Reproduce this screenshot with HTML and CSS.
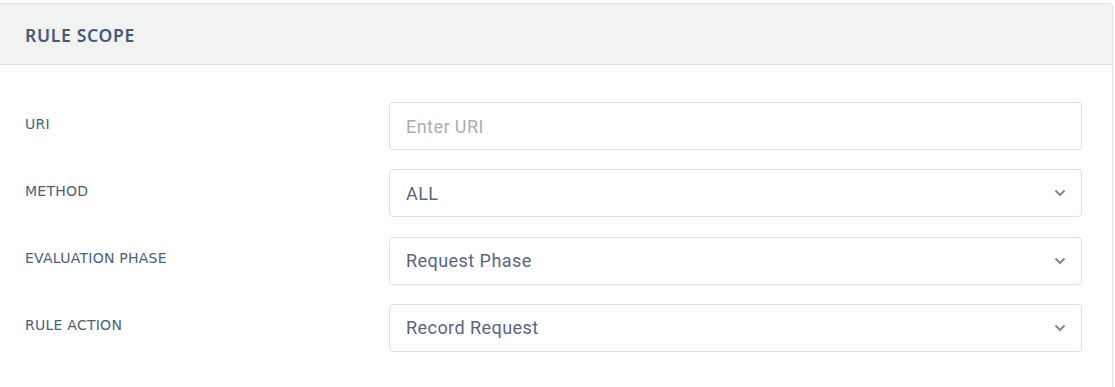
FILE: index.html
```html
<!DOCTYPE html>
<html>
<head>
<meta charset="utf-8">
<link rel="stylesheet" href="styles.css">
</head>
<body>
<div class="card">
  <div class="card-header">RULE SCOPE</div>
  <div class="card-body">
    <div class="row">
      <label class="label">URI</label>
      <div class="field"><span class="placeholder">Enter URI</span></div>
    </div>
    <div class="row">
      <label class="label">METHOD</label>
      <div class="field select"><span class="value">ALL</span>
        <svg class="chev" width="12" height="8" viewBox="0 0 12 8"><path d="M1.5 1.5 L6 6 L10.5 1.5" fill="none" stroke="#8c8c8c" stroke-width="2.2"/></svg>
      </div>
    </div>
    <div class="row">
      <label class="label">EVALUATION PHASE</label>
      <div class="field select"><span class="value">Request Phase</span>
        <svg class="chev" width="12" height="8" viewBox="0 0 12 8"><path d="M1.5 1.5 L6 6 L10.5 1.5" fill="none" stroke="#8c8c8c" stroke-width="2.2"/></svg>
      </div>
    </div>
    <div class="row">
      <label class="label">RULE ACTION</label>
      <div class="field select"><span class="value">Record Request</span>
        <svg class="chev" width="12" height="8" viewBox="0 0 12 8"><path d="M1.5 1.5 L6 6 L10.5 1.5" fill="none" stroke="#8c8c8c" stroke-width="2.2"/></svg>
      </div>
    </div>
  </div>
</div>
</body>
</html>
```
FILE: styles.css
```css
html, body { margin: 0; padding: 0; background: #fff; }
body { padding-top: 3px; overflow: hidden; height: 384px; }
.card {
  margin-left: -1px;
  width: 1114px;
  border: 1px solid #dfe2e5;
  border-bottom: none;
  border-radius: 0 4px 0 0;
  height: 384px;
  box-sizing: border-box;
}
.card-header {
  background: #f1f3f3;
  border-bottom: 1px solid #dfe2e5;
  border-radius: 0 4px 0 0;
  box-sizing: border-box;
  height: 61px;
  padding-left: 25px;
  display: flex;
  align-items: center;
  font-family: "Noto Sans", sans-serif;
  font-weight: 600;
  font-size: 17.5px;
  color: #435a78;
  letter-spacing: 0.7px;
  padding-top: 1px;
}
.card-body {
  padding: 37px 30px 0 25px;
  display: flex;
  flex-direction: column;
  gap: 19.3px;
}
.row {
  display: grid;
  grid-template-columns: 364px 1fr;
  align-items: center;
  height: 48px;
}
.label {
  font-family: "DejaVu Sans", sans-serif;
  font-size: 14px;
  color: #4a5f7c;
  letter-spacing: 0.25px;
  margin-bottom: 5px;
}
.field {
  height: 48px;
  box-sizing: border-box;
  border: 1px solid #dde0e4;
  border-radius: 4px;
  display: flex;
  align-items: center;
  padding: 0 16px;
  font-family: Roboto, "Noto Sans", sans-serif;
  font-size: 18px;
  letter-spacing: 0.45px;
  color: #536884;
  justify-content: space-between;
}
.placeholder { color: #a5afbb; }
.chev { margin-right: -1px; }
```
